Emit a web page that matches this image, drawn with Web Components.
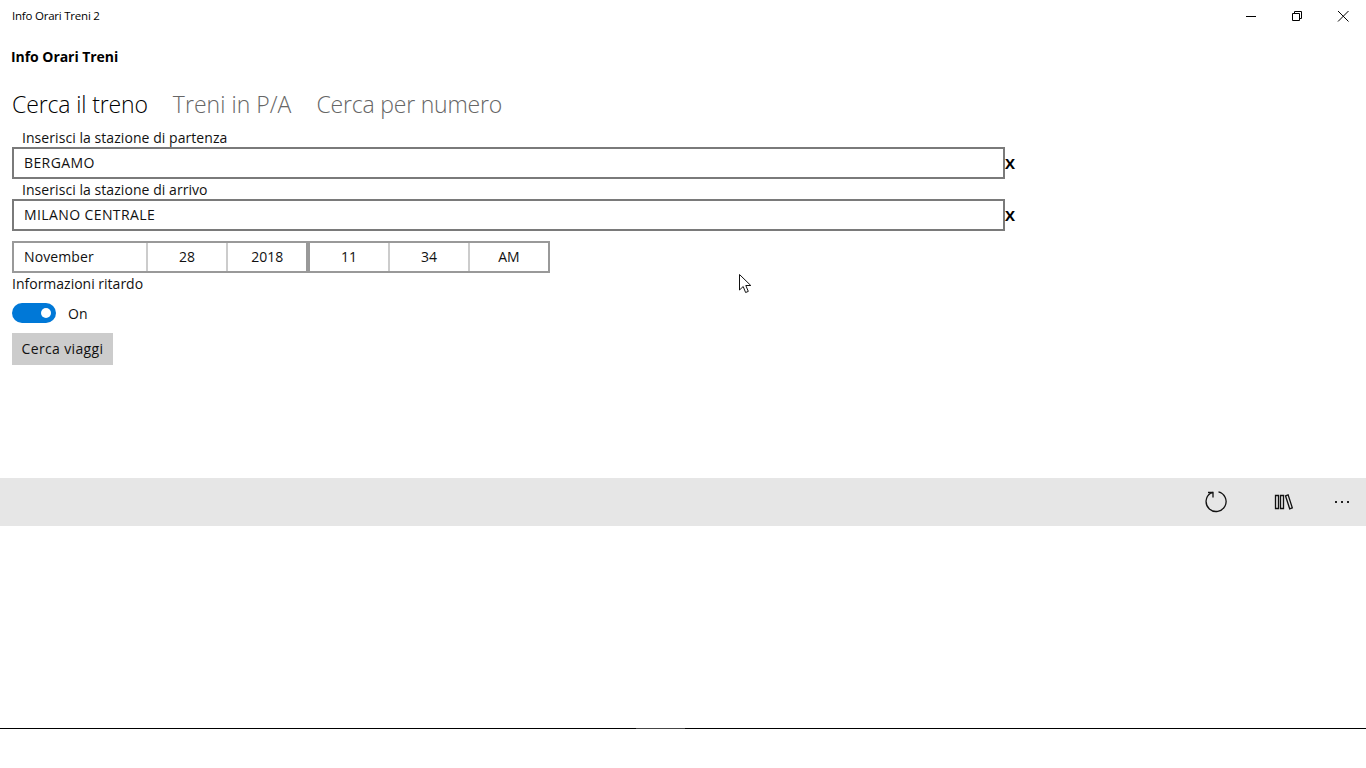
<!DOCTYPE html>
<html>
<head>
<meta charset="utf-8">
<title>Info Orari Treni 2</title>
<style>
  html, body { margin: 0; height: 100%; background: #fff; }
  body { font-family: "Open Sans", "Noto Sans", sans-serif; color: #000; overflow: hidden; }
  app-shell { height: 768px; }
  station-field + station-field { margin-top: 0; }
</style>
</head>
<body>
<app-shell>
  <title-bar>Info Orari Treni 2</title-bar>
  <app-heading>Info Orari Treni</app-heading>
  <pivot-tabs></pivot-tabs>
  <station-field label="Inserisci la stazione di partenza" value="BERGAMO"></station-field>
  <station-field label="Inserisci la stazione di arrivo" value="MILANO CENTRALE"></station-field>
  <date-time-picker></date-time-picker>
  <delay-toggle>Informazioni ritardo</delay-toggle>
  <action-button>Cerca viaggi</action-button>
  <command-bar></command-bar>
  <bottom-line></bottom-line>
  <mouse-pointer></mouse-pointer>
</app-shell>
<script>
class AppShell extends HTMLElement {
  constructor() {
    super();
    this.attachShadow({ mode: 'open' }).innerHTML = `
      <style>
        :host { display: flex; flex-direction: column; position: relative; width: 100%; }
      </style>
      <slot></slot>`;
  }
}

class TitleBar extends HTMLElement {
  constructor() {
    super();
    this.attachShadow({ mode: 'open' }).innerHTML = `
      <style>
        :host { display: flex; align-items: center; justify-content: space-between; height: 32px; font-size: 11.5px; letter-spacing: -0.22px; padding-left: 12px; }
        .title { margin-bottom: 2px; }
        .buttons { display: flex; height: 32px; }
        .btn { width: 46px; display: flex; align-items: center; justify-content: center; }
        svg { display: block; fill: none; stroke: #000; stroke-width: 1; }
      </style>
      <span class="title"><slot></slot></span>
      <div class="buttons">
        <div class="btn"><svg width="12" height="12" viewBox="0 0 12 12"><path d="M1 6.500h10"/></svg></div>
        <div class="btn"><svg width="12" height="12" viewBox="0 0 12 12"><path d="M1.500 3.500h7v7h-7zM3.500 3.500v-2h7v7h-2"/></svg></div>
        <div class="btn"><svg width="12" height="12" viewBox="0 0 12 12"><path d="M1 1l10.500 10.500M11.500 1L1 11.500"/></svg></div>
      </div>`;
  }
}

class AppHeading extends HTMLElement {
  constructor() {
    super();
    this.attachShadow({ mode: 'open' }).innerHTML = `
      <style>
        :host { display: block; height: 20px; line-height: 20px; margin-top: 15px; padding-left: 11px; font-size: 14px; font-weight: 700; letter-spacing: -0.05px; }
      </style>
      <slot></slot>`;
  }
}

class PivotTabs extends HTMLElement {
  constructor() {
    super();
    this.attachShadow({ mode: 'open' }).innerHTML = `
      <style>
        :host { display: flex; gap: 25px; height: 34px; line-height: 32px; margin-top: 21px; padding-left: 12px; font-size: 23px; font-weight: 300; letter-spacing: -0.13px; color: #666; }
        .on { color: #000; }
        .mid { letter-spacing: 0.03px; }
        .last { letter-spacing: -0.2px; }
      </style>
      <span class="on">Cerca il treno</span>
      <span class="mid">Treni in P/A</span>
      <span class="last">Cerca per numero</span>`;
  }
}

class StationField extends HTMLElement {
  connectedCallback() {
    this.attachShadow({ mode: 'open' }).innerHTML = `
      <style>
        :host { display: block; margin-top: 5px; font-size: 14px; color: #111; }
        label { display: block; height: 20px; line-height: 21px; padding-left: 22px; letter-spacing: 0.06px; }
        .row { display: flex; align-items: flex-start; padding-left: 12px; }
        .box { box-sizing: border-box; width: 993px; height: 32px; line-height: 27px; border: 2px solid #7a7a7a; padding-left: 10px; letter-spacing: 0.4px; }
        b { font-size: 15px; height: 32px; line-height: 33px; color: #000; }
      </style>
      <label>${this.getAttribute('label')}</label>
      <div class="row">
        <div class="box">${this.getAttribute('value')}</div>
        <b>X</b>
      </div>`;
  }
}

class DateTimePicker extends HTMLElement {
  constructor() {
    super();
    this.attachShadow({ mode: 'open' }).innerHTML = `
      <style>
        :host { display: block; margin: 10px 0 0 12px; font-size: 14px; color: #111; }
        .wrap { display: flex; width: 538px; height: 32px; }
        .group { display: flex; box-sizing: border-box; border: 2px solid #999; height: 32px; }
        .cell { box-sizing: border-box; width: 80px; line-height: 27px; text-align: center; border-left: 2px solid #ccc; }
        .cell:first-child { border-left: 0; }
        .month { width: 132px; text-align: left; padding-left: 10px; letter-spacing: 0.1px; }
        .month + .cell { width: 81px; }
        .group:first-child { width: 296px; }
        .group:last-child { width: 242px; }
        .group:last-child .cell:first-child { width: 78px; }
      </style>
      <div class="wrap">
        <div class="group">
          <div class="cell month">November</div>
          <div class="cell">28</div>
          <div class="cell">2018</div>
        </div>
        <div class="group">
          <div class="cell">11</div>
          <div class="cell">34</div>
          <div class="cell">AM</div>
        </div>
      </div>`;
  }
}

class DelayToggle extends HTMLElement {
  constructor() {
    super();
    this.attachShadow({ mode: 'open' }).innerHTML = `
      <style>
        :host { display: block; margin: 0 0 0 12px; font-size: 14px; color: #111; }
        .label { height: 21px; line-height: 21px; }
        .row { display: flex; align-items: center; height: 20px; margin-top: 9px; }
        .track { width: 44px; height: 20px; border-radius: 10px; background: #0078d7; display: flex; align-items: center; justify-content: flex-end; padding-right: 5px; box-sizing: border-box; }
        .knob { width: 10px; height: 10px; border-radius: 50%; background: #fff; }
        .state { margin-left: 12px; }
      </style>
      <div class="label"><slot></slot></div>
      <div class="row"><div class="track"><div class="knob"></div></div><span class="state">On</span></div>`;
  }
}

class ActionButton extends HTMLElement {
  constructor() {
    super();
    this.attachShadow({ mode: 'open' }).innerHTML = `
      <style>
        :host { display: block; width: 101px; height: 32px; line-height: 32px; margin: 10px 0 0 12px; background: #ccc; text-align: center; font-size: 14px; letter-spacing: 0.35px; color: #111; }
      </style>
      <slot></slot>`;
  }
}

class CommandBar extends HTMLElement {
  constructor() {
    super();
    this.attachShadow({ mode: 'open' }).innerHTML = `
      <style>
        :host { display: flex; justify-content: flex-end; align-items: center; height: 48px; margin-top: 113px; background: #e6e6e6; }
        .cmd { width: 68px; display: flex; justify-content: center; }
        .more { width: 48px; }
        svg { display: block; fill: none; stroke: #111; }
        .more svg { fill: #222; stroke: none; }
      </style>
      <div class="cmd"><svg width="24" height="24" viewBox="0 0 24 24" stroke-width="1.300"><path d="M14.500 1.800A10 10 0 1 1 6.500 3.200l2.500-.7"/><path d="M4 2.500h5v5"/></svg></div>
      <div class="cmd"><svg width="20" height="16" viewBox="0 0 20 16" stroke-width="1.300"><path d="M1.500 1.500h3v13h-3zM6.500 1.500h3v13h-3zM11.500 1.800l2.600-.9 4.200 13-2.600.9z"/></svg></div>
      <div class="cmd more"><svg width="16" height="4" viewBox="0 0 16 4"><rect x="1" y="1" width="2" height="2"/><rect x="7" y="1" width="2" height="2"/><rect x="13" y="1" width="2" height="2"/></svg></div>`;
  }
}

class BottomLine extends HTMLElement {
  constructor() {
    super();
    this.attachShadow({ mode: 'open' }).innerHTML = `
      <style>
        :host { display: block; height: 1px; margin-top: 202px; background: #000; position: relative; }
        .grip { position: absolute; left: 636px; top: 0; width: 49px; height: 1px; background: #444; }
      </style>
      <div class="grip"></div>`;
  }
}

class MousePointer extends HTMLElement {
  constructor() {
    super();
    this.attachShadow({ mode: 'open' }).innerHTML = `
      <style>
        :host { position: absolute; left: 739px; top: 274px; width: 13px; height: 20px; }
        svg { display: block; }
      </style>
      <svg width="13" height="20" viewBox="0 0 13 20"><path d="M.5.5v15.500l3.700-3.500 2.400 6 2.700-1.100-2.500-5.900h5z" fill="#fff" stroke="#111" stroke-width="1"/></svg>`;
  }
}

customElements.define('app-shell', AppShell);
customElements.define('title-bar', TitleBar);
customElements.define('app-heading', AppHeading);
customElements.define('pivot-tabs', PivotTabs);
customElements.define('station-field', StationField);
customElements.define('date-time-picker', DateTimePicker);
customElements.define('delay-toggle', DelayToggle);
customElements.define('action-button', ActionButton);
customElements.define('command-bar', CommandBar);
customElements.define('bottom-line', BottomLine);
customElements.define('mouse-pointer', MousePointer);
</script>
</body>
</html>
